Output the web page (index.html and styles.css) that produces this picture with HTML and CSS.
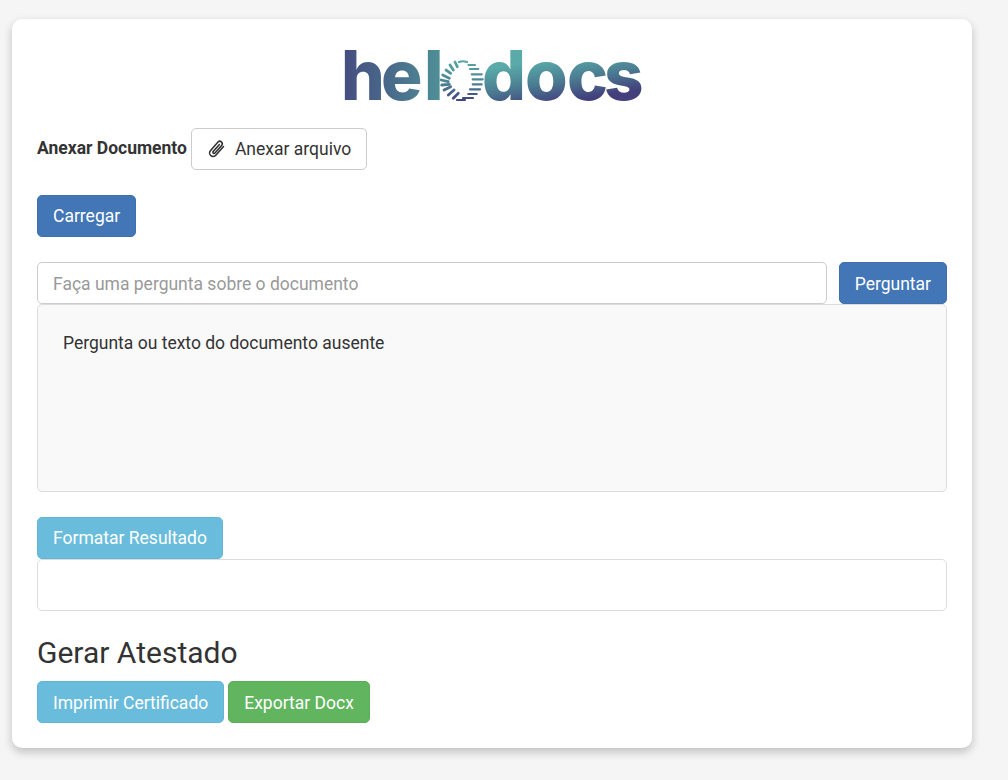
FILE: index.html
```html
<!DOCTYPE html>
<html lang="pt-BR">
<head>
<meta charset="utf-8">
<title>Helodocs</title>
<link rel="stylesheet" href="styles.css">
</head>
<body>
<main class="card">
  <div class="logo-row">
    <svg class="logo" width="318" height="84" viewBox="-10 -12 318 84" aria-label="helodocs">
      <defs>
        <linearGradient id="gHel" gradientUnits="userSpaceOnUse" x1="0" y1="30" x2="98" y2="30">
          <stop offset="0" stop-color="#454d80"/>
          <stop offset="0.55" stop-color="#4a6f8c"/>
          <stop offset="1" stop-color="#4f9097"/>
        </linearGradient>
        <linearGradient id="gDocs" gradientUnits="userSpaceOnUse" x1="215" y1="14" x2="222" y2="58">
          <stop offset="0" stop-color="#59aaa9"/>
          <stop offset="0.5" stop-color="#4b7d92"/>
          <stop offset="1" stop-color="#423f7c"/>
        </linearGradient>
        <linearGradient id="gBall" gradientUnits="userSpaceOnUse" x1="118" y1="16" x2="118" y2="56">
          <stop offset="0" stop-color="#58a8a6"/>
          <stop offset="0.6" stop-color="#4a7f92"/>
          <stop offset="1" stop-color="#43457f"/>
        </linearGradient>
      </defs>
      <text class="logo-text" y="55.500" x="-2 38 81" fill="url(#gHel)">hel</text>
      <g fill="none" stroke="url(#gBall)" stroke-linecap="round">
        <path stroke-width="2.200" d="M116 18q4-1.500 8 0M125.500 21H132M127 25h8.300M128.700 30.300h10M129.700 35.300h10M129.700 40.300h9M127 45.300h10M125.300 50h8.400M120 54h10M114 56h8"/>
        <path stroke-width="2.800" d="M112 18l2.300 4.700M107 21l3.300 5M103 26l4.700 3.300M99.700 31l6.600 3.300M98 36l7.300 1.700M98.700 41l7.600-.7M101 46l6.700-3.300M105.300 51l5.700-5M110.300 54.300l5-5"/>
      </g>
      <text class="logo-text" y="55.500" x="139 182 224 261" fill="url(#gDocs)">docs</text>
    </svg>
  </div>

  <div class="attach-row">
    <span class="attach-label">Anexar Documento</span>
    <button class="btn btn-default" type="button">
      <svg class="clip" width="18" height="20" viewBox="0 0 18 20" aria-hidden="true">
        <path d="M16.500 7.500 8.800 16.200a3.500 3.500 0 0 1-5.400-4.500L11 3a2.500 2.500 0 0 1 3.800 3.200L7.800 14.200a1.200 1.200 0 0 1-1.800-1.500L12.200 5.700" fill="none" stroke="#333" stroke-width="1.600" stroke-linecap="round"/>
      </svg>
      Anexar arquivo
    </button>
  </div>

  <div class="load-row">
    <button class="btn btn-primary" type="button">Carregar</button>
  </div>

  <div class="ask-row">
    <input class="ask-input" type="text" placeholder="Faça uma pergunta sobre o documento">
    <button class="btn btn-primary" type="button">Perguntar</button>
  </div>
  <div class="answer">Pergunta ou texto do documento ausente</div>

  <div class="format-row">
    <button class="btn btn-info" type="button">Formatar Resultado</button>
  </div>
  <div class="result"></div>

  <h3 class="section-title">Gerar Atestado</h3>
  <div class="actions">
    <button class="btn btn-info" type="button">Imprimir Certificado</button>
    <button class="btn btn-success" type="button">Exportar Docx</button>
  </div>
</main>
</body>
</html>
```
FILE: styles.css
```css
* {
  box-sizing: border-box;
}

html,
body {
  height: 100%;
}

body {
  margin: 0;
  padding: 19px 36px 0 12px;
  background: #f5f5f5;
  color: #333;
  font-family: Roboto, "Liberation Sans", sans-serif;
  font-size: 17.5px;
  line-height: 1.4;
  overflow: hidden;
}

.card {
  width: 960px;
  height: 729px;
  padding: 25px;
  background: #fff;
  border-radius: 10px;
  box-shadow: 0 4px 10px rgba(0, 0, 0, 0.22);
}

.logo-row {
  display: flex;
  justify-content: center;
  height: 60px;
}

.logo {
  display: block;
  flex: none;
  margin: -12px 0;
}

.logo-text {
  font-family: Inter, "Liberation Sans", sans-serif;
  font-size: 69px;
  font-weight: 800;
}

.btn {
  display: inline-flex;
  align-items: center;
  justify-content: center;
  height: 42px;
  padding: 0 15px;
  border: 1px solid transparent;
  border-radius: 5px;
  font-family: inherit;
  font-size: 17.5px;
  white-space: nowrap;
}

.ask-row .btn,
.actions .btn {
  padding-top: 2px;
}

.btn-default {
  background: #fff;
  border-color: #ccc;
  color: #333;
}

.btn-primary {
  background: #4276b6;
  border-color: #3f70ad;
  color: #fff;
}

.btn-info {
  background: #6abcdd;
  border-color: #5fb6d9;
  color: #fff;
}

.btn-success {
  background: #62b55f;
  border-color: #5bad58;
  color: #fff;
}

.attach-row {
  display: flex;
  align-items: center;
  gap: 4px;
  margin-top: 24px;
}

.attach-label {
  margin-bottom: 2px;
  font-weight: 700;
}

.clip {
  margin-right: 10px;
}

.load-row,
.format-row {
  display: flex;
  margin-top: 25px;
}

.ask-row {
  display: flex;
  gap: 12px;
  margin-top: 25px;
}

.ask-input {
  flex: 1;
  min-width: 0;
  height: 42px;
  padding: 2px 15px 0;
  background: #fff;
  border: 1px solid #ccc;
  border-radius: 5px;
  color: #333;
  font-family: inherit;
  font-size: 17.5px;
}

.ask-input::placeholder {
  color: #999;
  opacity: 1;
}

.answer {
  height: 188px;
  padding: 26px 25px 25px;
  background: #f9f9f9;
  border: 1px solid #ddd;
  border-radius: 5px;
  line-height: 25px;
}

.result {
  height: 52px;
  background: #fff;
  border: 1px solid #ddd;
  border-radius: 5px;
}

.section-title {
  margin: 25px 0 11px;
  font-size: 30px;
  font-weight: 400;
  line-height: 34px;
}

.actions {
  display: flex;
  gap: 4px;
}
```
